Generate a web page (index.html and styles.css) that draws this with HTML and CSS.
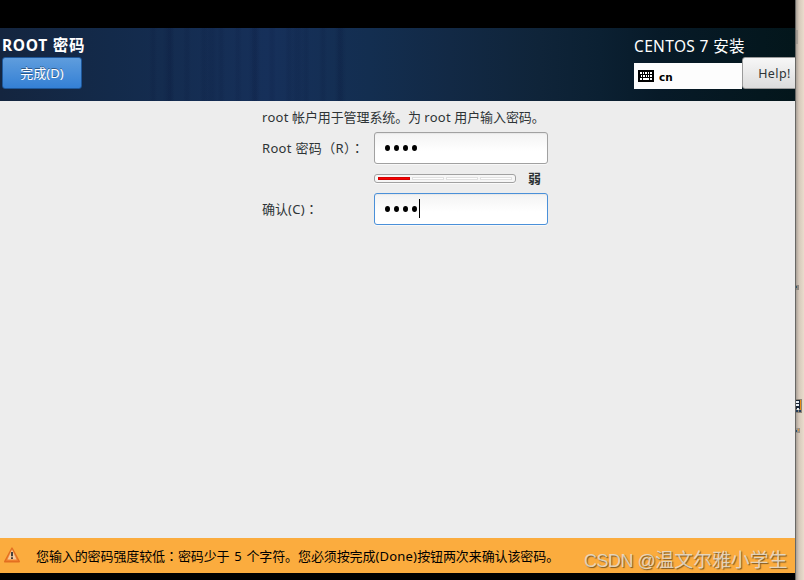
FILE: index.html
```html
<!DOCTYPE html>
<html lang="zh-CN">
<head>
    <meta charset="UTF-8">
    <meta name="viewport" content="width=device-width, initial-scale=1.0">
    <title>CENTOS 7 安装</title>
    <link rel="stylesheet" href="styles.css">
</head>
<body>

<div class="desktop">
    <div class="installer">
        <header class="header">
            <div class="header-left">
                <h1 class="title">ROOT 密码</h1>
                <button class="done">完成(D)</button>
            </div>
            <div class="header-right">
                <div class="product">CENTOS 7 安装</div>
                <div class="tools">
                    <div class="keyboard">
                        <svg width="16" height="12" viewBox="0 0 16 12" shape-rendering="crispEdges">
                            <rect width="16" height="12" rx="1" fill="#000"/>
                            <path d="M2 3h2M5 3h1M7 3h2M10 3h1M12 3h2M3 6h1M5 6h2M8 6h1M10 6h1M12 6h2" stroke="#fff" stroke-width="2"/>
                            <path d="M2 9h2M5 9h6M12 9h2" stroke="#fff" stroke-width="2"/>
                        </svg>
                        <span>cn</span>
                    </div>
                    <button class="help">Help!</button>
                </div>
            </div>
        </header>

        <main class="content">
            <p class="intro"><span class="wide">root</span> 帐户用于管理系统。为 <span class="wide">root</span> 用户输入密码。</p>
            <div class="form">
                <label class="label label-root"><span class="wide">Root</span> 密码（R）<span class="colon" lang="zh-TW">：</span></label>
                <div class="entry"><i></i><i></i><i></i><i></i></div>
                <div class="strength">
                    <div class="meter"><b class="on"></b><b></b><b></b><b></b></div>
                    <span class="level">弱</span>
                </div>
                <label class="label">确认<span class="wide">(C)</span><span class="colon" lang="zh-TW">：</span></label>
                <div class="entry focused"><i></i><i></i><i></i><i></i><span class="caret"></span></div>
            </div>
        </main>

        <footer class="warning">
            <svg width="18" height="17" viewBox="0 0 18 17">
                <defs>
                    <linearGradient id="tri" x1="0" y1="0" x2="0" y2="1">
                        <stop offset="0" stop-color="#f8c58a"/>
                        <stop offset="1" stop-color="#f07a22"/>
                    </linearGradient>
                </defs>
                <path d="M9 1 16.3 14.7H1.7z" fill="url(#tri)" stroke="#e36f20" stroke-width="1.4" stroke-linejoin="round"/>
                <path d="M9 3.5 13.5 12.5H4.5z" fill="#f8dcb8" opacity=".75"/>
                <path d="M9 5v4.2M9 10.2v1.8" stroke="#333" stroke-width="1.8"/>
            </svg>
            <p class="message">您输入的密码强度较低<span class="colon" lang="zh-TW">：</span>密码少于 5 个字符。您必须按完成<span class="latin">(Done)</span>按钮两次来确认该密码。</p>
        </footer>
    </div>

    <div class="behind">
        <svg width="9" height="580" viewBox="0 0 9 580">
            <path d="M1 30h2v14H1z" fill="#8b8782" opacity=".5"/>
            <path d="M1 285h3v5H1z" fill="#8d8780"/>
            <path d="M1 286h1v2H1z" fill="#315668"/>
            <path d="M1 399h6v14H1z" fill="#8e8579"/>
            <path d="M1 400h5v9H1z" fill="#172333"/>
            <path d="M1 401h3v2H1zM1 404h3v2H1zM2 408h2v2H2z" fill="#e8eef4"/>
            <path d="M5 400h1v10H5z" fill="#e88b12"/>
            <path d="M1 410h2v2H1zM4 410h2v2H4z" fill="#263e5a"/>
            <path d="M1 428h4v5H1z" fill="#9c948b"/>
            <path d="M1 430h1v2H1z" fill="#2b526d"/>
            <path d="M3 429h1v2H3z" fill="#d99644"/>
        </svg>
    </div>
</div>
<div class="watermark"><span>CSDN @</span>温文尔雅小学生</div>

</body>
</html>
```
FILE: styles.css
```css
* {
    box-sizing: border-box;
}
body {
    margin: 0;
    width: 804px;
    height: 580px;
    overflow: hidden;
    position: relative;
    background: #000;
    font-family: 'Noto Sans', 'Noto Sans CJK SC', sans-serif;
    font-size: 13px;
    color: #2e3436;
}
h1, p {
    margin: 0;
}
button {
    font: inherit;
    padding: 0;
}
svg {
    display: block;
}
.desktop {
    display: flex;
    height: 580px;
}
.installer {
    width: 795px;
    padding: 28px 0 7px;
    display: flex;
    flex-direction: column;
    overflow: hidden;
}
.header {
    height: 73px;
    flex: none;
    display: flex;
    justify-content: space-between;
    color: #fff;
    background:
        repeating-linear-gradient(90deg, transparent 0 4px, rgba(5, 15, 50, 0.1) 7px 9px, transparent 12px 17px) 145px 0 / 200px 100% no-repeat,
        repeating-linear-gradient(90deg, transparent 0 12px, rgba(5, 15, 50, 0.1) 17px 20px, transparent 25px 43px) 150px 0 / 220px 100% no-repeat,
        linear-gradient(90deg, #14253f 0, #132a4a 110px, #16305a 270px, #132e50 370px, #122945 450px, #0f2439 540px, #0b2032 600px, #071a28 660px, #03161b 795px);
}
.header-left {
    padding: 5px 0 0 2px;
}
.title {
    font-size: 15.5px;
    line-height: 24px;
    font-weight: bold;
    letter-spacing: 0.7px;
    white-space: nowrap;
}
.done {
    display: block;
    width: 80px;
    height: 32px;
    padding-bottom: 2px;
    color: #fff;
    border: 1px solid #1e5799;
    border-radius: 3px;
    background: linear-gradient(#5f9ddd, #3480d5);
    text-shadow: 0 -1px rgba(0, 0, 0, 0.4);
}
.header-right {
    width: 161px;
    padding-top: 7px;
}
.product {
    font-size: 15.5px;
    line-height: 23px;
    letter-spacing: 0.35px;
    white-space: nowrap;
}
.tools {
    display: flex;
    align-items: flex-start;
    margin-top: -1px;
}
.keyboard {
    width: 108px;
    height: 26px;
    margin-top: 6px;
    padding-left: 4px;
    display: flex;
    align-items: center;
    gap: 5px;
    flex: none;
    background: #fdfdfd;
    color: #000;
    font-family: 'DejaVu Sans', sans-serif;
    font-size: 10.5px;
    font-weight: bold;
}
.keyboard span {
    padding-top: 1px;
}
.help {
    width: 64px;
    height: 32px;
    flex: none;
    border: 1px solid #9a9a9a;
    border-radius: 3px;
    background: linear-gradient(#f7f7f7, #dcdcdc);
    color: #2e3436;
    font-size: 12.5px;
    letter-spacing: 0.4px;
    padding-left: 1px;
}
.content {
    flex: 1;
    padding: 7px 0 0 262px;
    background: #ededed;
}
.intro {
    height: 24px;
    line-height: 19px;
    white-space: nowrap;
    letter-spacing: -0.1px;
}
.wide {
    letter-spacing: 0.3px;
}
.colon {
    font-family: 'Noto Sans CJK TC', sans-serif;
}
.form {
    display: grid;
    grid-template-columns: 112px 174px;
    grid-template-rows: 32px 29px 32px;
    align-items: center;
}
.label {
    white-space: nowrap;
    line-height: 18px;
    padding-bottom: 1px;
}
.label-root {
    letter-spacing: 0.35px;
}
.entry {
    height: 32px;
    padding-left: 10px;
    display: flex;
    align-items: center;
    border: 1px solid #a1a1a1;
    border-radius: 3px;
    background: linear-gradient(#f3f3f3, #fff 60%);
    box-shadow: inset 0 1px 1px rgba(0, 0, 0, 0.05), 0 1px #f8f8f8;
}
.entry.focused {
    border-color: #4a90d9;
}
.entry i {
    width: 5px;
    height: 6px;
    margin-right: 4px;
    border-radius: 50%;
    background: #000;
}
.caret {
    width: 1px;
    height: 19px;
    margin-left: -2px;
    margin-bottom: 1px;
    background: #000;
}
.strength {
    grid-column: 2;
    display: flex;
    align-items: center;
}
.meter {
    width: 142px;
    height: 9px;
    padding: 2px 3px;
    display: grid;
    grid-template-columns: repeat(4, 1fr);
    gap: 2px;
    border: 1px solid #a1a1a1;
    border-radius: 3px;
    background: #f6f6f6;
    box-shadow: 0 1px #fafafa;
}
.meter b {
    border: 1px solid #e0e0e0;
    background: #fff;
}
.meter .on {
    border-color: #d40000;
    background: #f80000;
}
.level {
    margin-left: 12px;
    padding-bottom: 2px;
    font-weight: bold;
}
.warning {
    height: 35px;
    flex: none;
    padding-left: 3px;
    display: flex;
    align-items: center;
    gap: 15px;
    background: #fbac3e;
    color: #000;
}
.message {
    white-space: nowrap;
    letter-spacing: -0.1px;
    word-spacing: 1.5px;
}
.latin {
    letter-spacing: 0.2px;
}
.behind {
    width: 9px;
    background: linear-gradient(90deg, #696865 0 1px, #aaa198 1px, #d6c9bb 4px, #e9dccc 9px);
}
.watermark {
    position: absolute;
    left: 584px;
    top: 548px;
    font-family: 'Liberation Sans', 'Noto Sans CJK SC', sans-serif;
    font-size: 18.9px;
    line-height: 26px;
    white-space: nowrap;
    color: rgba(232, 224, 211, 0.85);
    text-shadow: 1px 1px 1px rgba(80, 60, 30, 0.75);
}
.watermark span {
    font-size: 18px;
    letter-spacing: -0.5px;
}
```
